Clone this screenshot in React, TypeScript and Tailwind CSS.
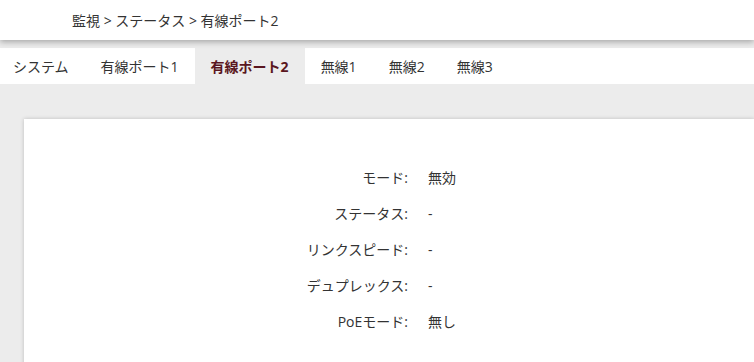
const tabs = ['システム', '有線ポート1', '有線ポート2', '無線1', '無線2', '無線3'];

const rows: [string, string][] = [
  ['モード:', '無効'],
  ['ステータス:', '-'],
  ['リンクスピード:', '-'],
  ['デュプレックス:', '-'],
  ['PoEモード:', '無し'],
];

export default function App() {
  const active = 2;
  return (
    <div
      className="w-[754px] h-[362px] overflow-hidden bg-[#ececec] text-[#333] text-[14px]"
      style={{ fontFamily: '"Open Sans", "Noto Sans CJK JP", sans-serif' }}
    >
      <header className="relative z-10 h-[40px] bg-white flex items-center pl-[72px] shadow-[0_2px_6px_rgba(0,0,0,0.3)]">
        <span>監視 &gt; ステータス &gt; 有線ポート2</span>
      </header>
      <nav className="mt-[8px] h-[36px] bg-white flex">
        {tabs.map((t, i) => (
          <div
            key={t}
            className={
              'h-full flex items-center px-[16px] first:pl-[13px] ' +
              (i === active ? 'bg-[#ececec] text-[#5a1620] font-bold' : '')
            }
          >
            {t}
          </div>
        ))}
      </nav>
      <div className="pt-[35px] pl-[24px]">
        <div className="bg-white h-[300px] shadow-[0_0_4px_rgba(0,0,0,0.2)] pt-[48px]">
          <div className="flex flex-col gap-[15px]">
            {rows.map(([k, v]) => (
              <div key={k} className="flex h-[21px] items-center">
                <div className="w-[384px] text-right">{k}</div>
                <div className="pl-[20px]">{v}</div>
              </div>
            ))}
          </div>
        </div>
      </div>
    </div>
  );
}
